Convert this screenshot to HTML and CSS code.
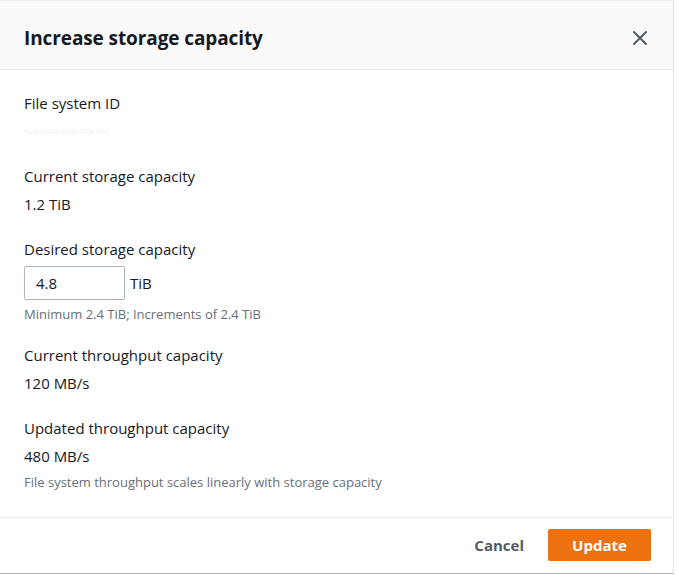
FILE: index.html
```html
<!DOCTYPE html>
<html lang="en">
<head>
<meta charset="utf-8">
<title>Increase storage capacity</title>
<link rel="stylesheet" href="styles.css">
</head>
<body>
<div class="modal">
  <header class="modal-header">
    <h2 class="modal-title">Increase storage capacity</h2>
    <button class="close-btn" aria-label="Close">
      <svg width="16" height="16" viewBox="0 0 16 16"><path d="M2 2 L14 14 M14 2 L2 14" stroke="#545b64" stroke-width="2" fill="none" stroke-linecap="round"/></svg>
    </button>
  </header>
  <div class="modal-body">
    <div class="field">
      <div class="label">File system ID</div>
      <div class="value redacted">fs-0a1b2c3d4e5f6a7b8</div>
    </div>
    <div class="field">
      <div class="label">Current storage capacity</div>
      <div class="value">1.2 TiB</div>
    </div>
    <div class="field with-hint">
      <div class="label">Desired storage capacity</div>
      <div class="input-row">
        <input class="text-input" type="text" value="4.8">
        <span class="unit">TiB</span>
      </div>
      <div class="hint after-input">Minimum 2.4 TiB; Increments of 2.4 TiB</div>
    </div>
    <div class="field">
      <div class="label">Current throughput capacity</div>
      <div class="value">120 MB/s</div>
    </div>
    <div class="field last">
      <div class="label">Updated throughput capacity</div>
      <div class="value">480 MB/s</div>
      <div class="hint">File system throughput scales linearly with storage capacity</div>
    </div>
  </div>
  <footer class="modal-footer">
    <button class="btn-link">Cancel</button>
    <button class="btn-primary">Update</button>
  </footer>
</div>
</body>
</html>
```

FILE: styles.css
```css
html, body {
  margin: 0;
  padding: 0;
  background: #ffffff;
}
body {
  font-family: "Open Sans", "Noto Sans", "Liberation Sans", sans-serif;
  color: #16191f;
}
.modal {
  width: 674px;
  height: 574px;
  border-top: 1px solid #ececec;
  border-right: 1px solid #e2e2e2;
  border-bottom: 1px solid #aab1b5;
  box-sizing: border-box;
  display: flex;
  flex-direction: column;
  background: #fff;
}
.modal-header {
  height: 69px;
  flex: none;
  background: #fafafa;
  border-bottom: 1px solid #eaeded;
  display: flex;
  align-items: center;
  justify-content: space-between;
  padding: 6px 25px 0 24px;
  box-sizing: border-box;
}
.modal-title {
  margin: 0;
  font-size: 19px;
  font-weight: 700;
  line-height: 26px;
  color: #16191f;
  letter-spacing: -0.1px;
}
.close-btn {
  border: 0;
  background: transparent;
  padding: 0;
  width: 16px;
  height: 16px;
  display: flex;
}
.modal-body {
  flex: 1;
  padding: 22px 24px 0 24px;
  border-bottom: 1px solid #eaeded;
}
.field {
  margin-bottom: 23px;
}
.field.with-hint {
  margin-bottom: 21px;
}
.field.last {
  margin-bottom: 0;
}
.label {
  font-size: 15px;
  line-height: 22px;
  margin-bottom: 6px;
}
.value {
  font-size: 15px;
  line-height: 22px;
}
.redacted {
  color: #f1f1f1;
  font-size: 8px;
  line-height: 22px;
}
.input-row {
  display: flex;
  align-items: center;
  gap: 5px;
}
.text-input {
  width: 101px;
  height: 34px;
  box-sizing: border-box;
  border: 1px solid #aab7b8;
  border-radius: 2px;
  padding: 0 11px;
  font-family: inherit;
  font-size: 15px;
  color: #16191f;
  outline: none;
}
.unit {
  font-size: 15px;
}
.hint {
  font-size: 13px;
  line-height: 18px;
  color: #687078;
  margin-top: 6px;
}
.hint.after-input {
  margin-top: 5px;
}
.modal-footer {
  flex: none;
  height: 55px;
  display: flex;
  align-items: center;
  justify-content: flex-end;
  gap: 24px;
  padding: 0 22px 2px 0;
  box-sizing: border-box;
}
.btn-link {
  border: 0;
  background: transparent;
  font-family: inherit;
  font-size: 15px;
  font-weight: 700;
  color: #545b64;
  padding: 0;
}
.btn-primary {
  width: 103px;
  height: 32px;
  border: 0;
  border-radius: 2px;
  background: #ec7211;
  color: #fff;
  font-family: inherit;
  font-size: 15px;
  font-weight: 700;
}
```
